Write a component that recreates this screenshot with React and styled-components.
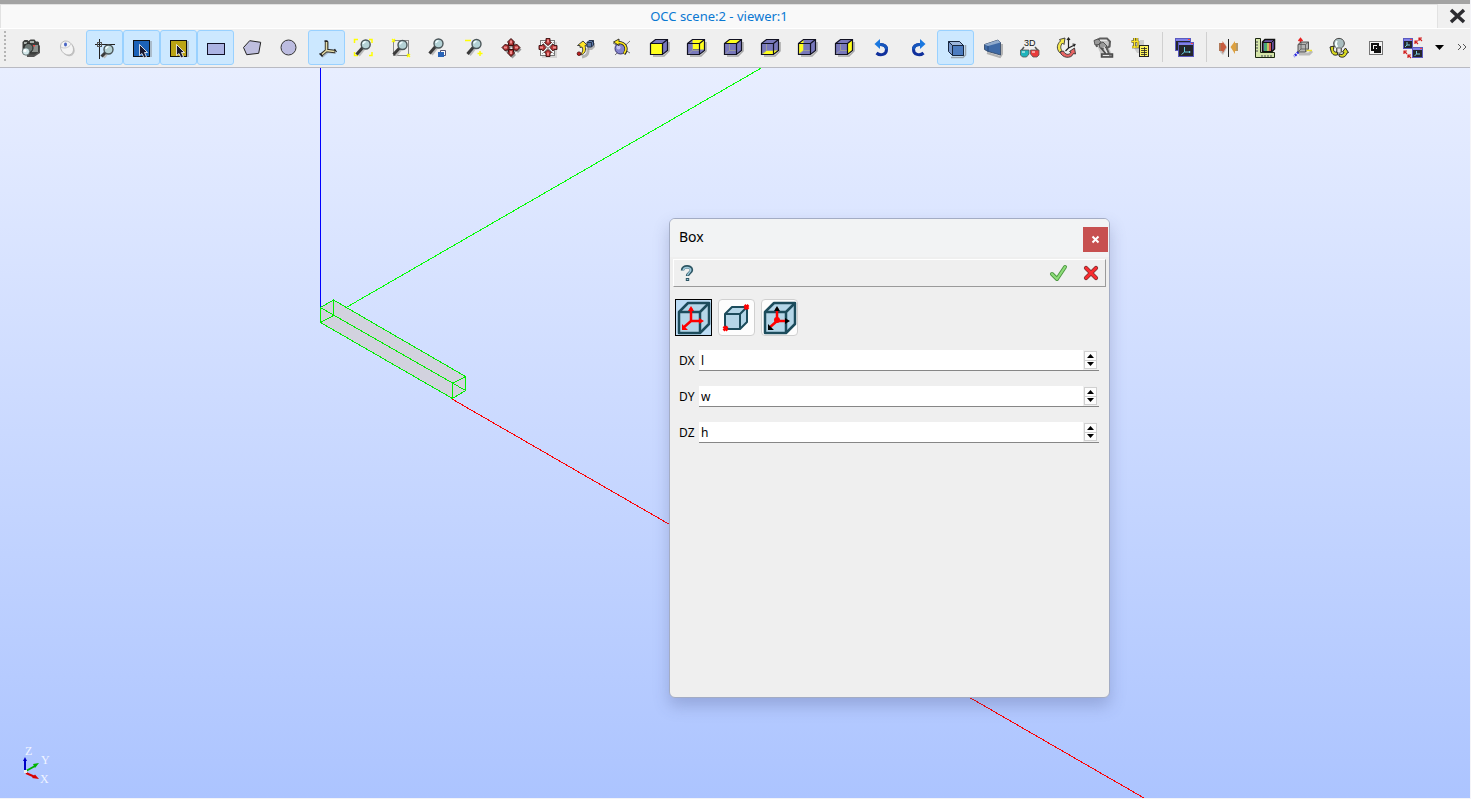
import React, { useState } from 'react';
import styled, { createGlobalStyle, css } from 'styled-components';

const GlobalStyle = createGlobalStyle`
  *, *::before, *::after { box-sizing: border-box; }
  html, body, #root { height: 100%; }
  body {
    margin: 0;
    background: #fff;
    color: #000;
    font-family: "Noto Sans", "Open Sans", sans-serif;
    font-size: 12px;
    overflow: hidden;
  }
  button, input { font: inherit; color: inherit; }
`;

/* ---------- window frame ---------- */

const Frame = styled.div`
  display: flex;
  flex-direction: column;
  height: 100vh;
  padding: 0 1px 1px 0;
  background: #f4f4f8;
`;

const TitleBar = styled.header`
  display: flex;
  flex: none;
  height: 29px;
  border-top: 4px solid #a3a3a3;
  border-bottom: 1px solid #fff;
  background: #f0f0f0;
`;

const Title = styled.h1`
  flex: 1;
  margin: 0;
  border: solid #e2e2e2;
  border-width: 1px 1px 0 1px;
  background: #f9f9f9;
  color: #0a78d2;
  font-size: 13px;
  font-weight: 400;
  line-height: 23px;
  text-align: center;
`;

const CloseView = styled.button`
  width: 32px;
  padding: 0 0 0 8px;
  border: 0;
  background: none;
  line-height: 0;
`;

/* ---------- toolbar ---------- */

const Toolbar = styled.div`
  display: flex;
  flex: none;
  align-items: center;
  height: 39px;
  padding: 0 2px 2px 4px;
  border-bottom: 1px solid #b9bac2;
  background: #efefef;
`;

const Grip = styled.span`
  width: 2px;
  height: 32px;
  margin-right: 6px;
  background: repeating-linear-gradient(#b4b4b4 0 2px, transparent 2px 4px);
`;

const ToolButton = styled.button`
  display: flex;
  flex: none;
  align-items: center;
  justify-content: center;
  width: 37px;
  height: 35px;
  padding: 0;
  border: 1px solid transparent;
  border-radius: 3px;
  background: none;
  ${(p) => p.$active && css`
    border-color: #99d1ff;
    background: #cce8ff;
  `}
`;

const Separator = styled.span`
  flex: none;
  width: 1px;
  height: 30px;
  margin: 0 3px;
  background: #d0d0d0;
`;

const MenuArrow = styled.button`
  width: 15px;
  height: 35px;
  padding: 0;
  border: 0;
  background: none;
  line-height: 0;
`;

const Overflow = styled.button`
  width: 12px;
  height: 35px;
  margin-left: auto;
  padding: 0;
  border: 0;
  background: none;
  line-height: 0;
`;

/* ---------- 3D view ---------- */

const Viewport = styled.main`
  position: relative;
  flex: 1;
  min-height: 0;
  overflow: hidden;
  background: linear-gradient(#e8eeff, #acc4ff);
`;

const SceneDrawing = styled.svg`
  position: absolute;
  inset: 0;
  width: 100%;
  height: 100%;
`;

const Trihedron = styled.svg`
  position: absolute;
  left: 18px;
  bottom: 10px;
`;

/* ---------- dialog ---------- */

const Dialog = styled.section`
  position: absolute;
  left: 669px;
  top: 150px;
  width: 441px;
  height: 480px;
  border: 1px solid #a3acc4;
  border-radius: 6px;
  background: #efefef;
  box-shadow: 0 8px 16px rgba(70, 80, 130, 0.28);
  overflow: hidden;
`;

const DialogHeader = styled.div`
  display: flex;
  align-items: flex-start;
  justify-content: space-between;
  height: 38px;
  padding: 8px 1px 0 9px;
  background: #f2f3f4;
`;

const DialogTitle = styled.h2`
  margin: 0;
  font-size: 14px;
  font-weight: 400;
  line-height: 20px;
`;

const DialogClose = styled.button`
  width: 25px;
  height: 25px;
  padding: 0;
  border: 0;
  background: #c75050;
  line-height: 0;
`;

const ActionBar = styled.div`
  display: flex;
  align-items: center;
  justify-content: space-between;
  height: 28px;
  margin: 2px 3px 0;
  padding: 0 2px;
  border: 1px solid;
  border-color: #fff #9a9a9a #9a9a9a #fff;
`;

const ActionGroup = styled.div`
  display: flex;
  gap: 8px;
`;

const ActionButton = styled.button`
  width: 24px;
  height: 24px;
  padding: 0;
  border: 0;
  background: none;
  line-height: 0;
`;

const Modes = styled.div`
  display: flex;
  gap: 6px;
  padding: 12px 5px 0;
`;

const ModeButton = styled.button`
  width: 37px;
  height: 37px;
  padding: 0;
  border: 1px solid #d0d0d0;
  border-radius: 4px;
  background: #fdfdfd;
  line-height: 0;
  ${(p) => p.$active && css`
    border-color: #000;
    border-radius: 0;
    background: #bcdcf4;
  `}
`;

const Fields = styled.form`
  display: grid;
  gap: 15px;
  padding: 14px 10px 0 9px;
`;

const Field = styled.div`
  display: flex;
  height: 21px;
`;

const FieldLabel = styled.label`
  width: 20px;
  line-height: 21px;
`;

const FieldBox = styled.div`
  display: flex;
  flex: 1;
  border-bottom: 1px solid #868686;
`;

const FieldInput = styled.input`
  flex: 1;
  min-width: 0;
  padding: 0 2px;
  border: 0;
  outline: 0;
  background: #fff;
`;

const Spin = styled.div`
  display: flex;
  flex-direction: column;
  width: 16px;
  padding: 1px 2px 1px 1px;
`;

const SpinButton = styled.button`
  display: flex;
  flex: 1;
  align-items: center;
  justify-content: center;
  min-height: 0;
  padding: 0;
  border: 1px solid #d0d0d0;
  background: #fdfdfd;
  & + & { border-top: 0; }
`;

/* ---------- icons ---------- */

const Icon = ({ children }) => (
  <svg width="25" height="25" viewBox="0 0 25 25" fill="none" aria-hidden="true">{children}</svg>
);

const Lens = ({ x = 14.5, y = 9.5, hx = 5.5, hy = 19.5 }) => (
  <g>
    <path d={`M${x - 2} ${y + 4.5}L${hx + 2} ${hy + 1}`} stroke="#bbb" strokeWidth="3" />
    <path d={`M${x - 3} ${y + 3}L${hx} ${hy}`} stroke="#3a3a3a" strokeWidth="3" />
    <circle cx={x} cy={y} r="4.5" fill="#b4d2d6" stroke="#4a5558" strokeWidth="1.4" />
    <path d={`M${x - 2.5} ${y - 0.5}a2.5 2.5 0 0 1 2.5-2.2`} stroke="#eefcff" strokeWidth="1.5" />
  </g>
);

const Camera = () => (
  <Icon>
    <path d="M8 10l11-3 3 4v7l-6 4H9z" fill="#555" />
    <path d="M4.500 7l2-2h3l1 1 2-1.500h4l1.500 2H20l1 1v9l-4 3H7l-2.500-2z" fill="#3d3f3d" />
    <path d="M6 7h3v2H6zM12 6h4v2h-4z" fill="#a9b0ac" />
    <path d="M14 10h6v7h-6z" fill="#8c918e" />
    <path d="M15 10h2v1.500h-2z" fill="#e44" />
    <circle cx="10.500" cy="13" r="4.500" fill="#6d7774" stroke="#222" />
    <circle cx="8" cy="16.500" r="3.700" fill="#d4e8ea" stroke="#4c5a5a" strokeWidth=".8" />
    <circle cx="7" cy="15.500" r="1.500" fill="#fff" />
  </Icon>
);

const Mouse = () => (
  <Icon>
    <ellipse cx="13.500" cy="14.500" rx="6" ry="7" fill="#c4c4c4" transform="rotate(-35 13.500 14.500)" />
    <ellipse cx="12" cy="13" rx="6" ry="7.500" fill="#f4f4f4" stroke="#b4b4b4" strokeWidth=".8" transform="rotate(-35 12 13)" />
    <path d="M6 12c3 2 8 1 10-3" stroke="#ccc" />
    <ellipse cx="10.500" cy="9.500" rx="1.500" ry="2" fill="#4a65c4" />
  </Icon>
);

const Preselect = () => (
  <Icon>
    <path d="M3 9.500h20M7.500 4v20" stroke="#222" strokeWidth="1" shapeRendering="crispEdges" />
    <path d="M5.500 7.500h4v4h-4z" stroke="#555" fill="none" shapeRendering="crispEdges" />
    <Lens x={16.500} y={14.500} hx={9.500} hy={21.500} />
  </Icon>
);

const PickIcon = ({ color }) => (
  <Icon>
    <path d="M7 6h16v16H7z" fill="#8a8f98" opacity=".5" />
    <path d="M4.500 5.500h16v16h-16z" fill={color} stroke="#111" shapeRendering="crispEdges" />
    <path d="M10.500 9.500v11l2.500-2 2 4.500 2.500-1-2-4.500h3z" fill="#181830" stroke="#fff" strokeWidth=".8" />
  </Icon>
);

const RectIcon = () => (
  <Icon><path d="M4.500 8.500h17v11h-17z" fill="#acb4e4" stroke="#111128" shapeRendering="crispEdges" /></Icon>
);

const Pentagon = () => (
  <Icon><path d="M3.500 12.500L9.700 5.700l11 1.600-2 11-12 1.400z" fill="#bfbfdf" stroke="#222" /></Icon>
);

const CircleIcon = () => (
  <Icon><circle cx="11.500" cy="12.500" r="7.500" fill="#bcbce0" stroke="#333" /></Icon>
);

const AxesIcon = () => (
  <Icon>
    <path d="M14 7v10l8 1M14 17l-6 5" stroke="#8c96a0" strokeWidth="2" opacity=".6" />
    <path d="M12.500 6v9.500l8.500 1M12.500 15.500L7 20" stroke="#2c2a24" strokeWidth="3.400" />
    <path d="M12.500 7v8.500l8 1M12.500 15.500L8 19.500" stroke="#e4dca8" strokeWidth="1.600" />
    <path d="M10.500 6h3M20.500 14l2 3M5.500 18.500l3 3" stroke="#222" strokeWidth="1.300" />
  </Icon>
);

const FitAll = () => (
  <Icon>
    <path d="M3.500 8V4.500H7M18 4.500h3V8M21 17v3.500h-3M7 20.500H3.500V17" stroke="#ff0" strokeWidth="1.500" />
    <Lens x={14.700} y={9.500} />
  </Icon>
);

const FitArea = () => (
  <Icon>
    <path d="M5.500 5.500h15v15h-15z" stroke="#8a8a8a" shapeRendering="crispEdges" />
    <path d="M4 4l3 3M7 4L4 7M19 19l3 3M22 19l-3 3" stroke="#ff0" strokeWidth="1.300" />
    <Lens x={14.500} y={10} />
  </Icon>
);

const FitSelection = () => (
  <Icon>
    <Lens x={13.500} y={8.500} hx={4.500} hy={18.500} />
    <path d="M15.500 15.500h5v5h-5z" fill="#fff" stroke="#557" />
    <path d="M13 17h6v5h-6z" fill="#2a64b8" />
  </Icon>
);

const ZoomIcon = () => (
  <Icon>
    <path d="M3 5.500h6M18 16v5M15.500 18.500h5" stroke="#ff0" strokeWidth="1.500" />
    <Lens x={14.500} y={9} hx={5.500} hy={19} />
  </Icon>
);

const arrowShape = 'M12 3.500l3.500 3.500-1 1v2.500h-5V8l-1-1z';
const Pan = () => (
  <Icon>
    <g transform="translate(1.500 2)" fill="#999">
      {[0, 90, 180, 270].map((a) => <path key={a} d={arrowShape} transform={`rotate(${a} 12 12.500)`} />)}
    </g>
    {[0, 90, 180, 270].map((a) => (
      <path key={a} d={arrowShape} fill="#a83030" stroke="#3a1010" strokeWidth="1" transform={`rotate(${a} 12 12.500)`} />
    ))}
    <path d="M11 5.500h2v3h-2zM5 11.500h3v2H5zM16 11.500h3v2h-3zM11 16h2v3h-2z" fill="#f08c8c" />
  </Icon>
);

const inwardShape = 'M12 10.500l3.500-3-1.500-1V3.500h-4v3l-1.500 1z';
const GlobalPan = () => (
  <Icon>
    <path d="M6 7h15v16H6z" fill="#bbb" opacity=".5" />
    <path d="M4.500 5.500h14v15h-14z" fill="#f6f6f6" stroke="#777" shapeRendering="crispEdges" />
    <path d="M6 7l12 12M18 7L6 19" stroke="#aaa" />
    {[0, 90, 180, 270].map((a) => (
      <path key={a} d={inwardShape} fill="#b83434" stroke="#3a1010" strokeWidth=".9" transform={`rotate(${a} 12 12.500)`} />
    ))}
    <path d="M11 4.500h2v3h-2zM4 11.500h3v2H4zM17 11.500h3v2h-3zM11 17.500h2v3h-2z" fill="#f08c8c" />
  </Icon>
);

const RotationPoint = () => (
  <Icon>
    <path d="M15 8h7v4l-3 3h-4z" fill="#888" opacity=".6" />
    <path d="M14 7.500l2-2h4.500V10l-2 2H14z" fill="#5b78a8" stroke="#26344e" strokeWidth="1" />
    <path d="M14 7.500h4.500V12M18.500 7.500l2-2" stroke="#26344e" />
    <path d="M9 22c6-1 7-5 5.500-9" stroke="#777" strokeWidth="3" opacity=".5" />
    <path d="M10 6l-5.500 4.500 2.500 0v2l2-.500c1.500 3 .500 5-1.500 8 4.500-1 6-4.500 4.500-9.500l2-.500z" fill="#ffe628" stroke="#333" strokeWidth=".9" />
    <circle cx="6" cy="18.700" r="1.800" fill="#c02020" stroke="#400" strokeWidth=".8" />
  </Icon>
);

const Rotate = () => (
  <Icon>
    <path d="M3 8l17 10M20 6L5 20" stroke="#666" strokeWidth=".9" />
    <circle cx="10.500" cy="13.500" r="5.500" fill="#8484cc" stroke="#38346e" />
    <circle cx="8.500" cy="12.500" r="2" fill="#c4c4f0" />
    <path d="M14 19c4-5 2-11.500-6-11.500" stroke="#222" strokeWidth="3.200" />
    <path d="M9 4v6.500L3.500 7z" fill="#ffe81c" stroke="#222" strokeWidth=".9" />
    <path d="M14 18.500c4-5 1.500-11-6-11" stroke="#ffe81c" strokeWidth="1.600" />
  </Icon>
);

const cubeFaces = {
  front: 'M3.500 8.500h12v11h-12z',
  back: 'M8.500 4.500h12v10h-12z',
  top: 'M3.500 8.500l5-4h12l-5 4z',
  bottom: 'M3.500 19.500l5-4h12l-5 4z',
  left: 'M3.500 8.500l5-4v11l-5 4z',
  right: 'M15.500 8.500l5-4v11l-5 4z',
};

const CubeIcon = ({ face }) => (
  <Icon>
    <path d="M6 21h11l5-5V7" stroke="#a8a8a8" strokeWidth="1.500" />
    <path d="M3.500 8.500l5-4h12v11l-5 4h-12z" fill="#7878bc" />
    <path d={cubeFaces[face]} fill="#ffff1e" />
    {face === 'back' && <path d="M8.500 8.500h7v6h-7z" stroke="#777" />}
    {face !== 'front' && <path d="M8.500 8.500v7h7M8.500 15.500l-5 4" stroke="#9c9c9c" />}
    <path d="M3.500 8.500l5-4h12v11l-5 4h-12zM3.500 8.500h12v11M15.500 8.500l5-4" stroke="#111122" strokeWidth="1.200" />
  </Icon>
);

const Undo = ({ flip }) => (
  <Icon>
    <g transform={flip ? 'matrix(-1 0 0 1 25 0)' : undefined}>
      <path d="M7.500 18c4 3.500 10 1.500 10-3.500 0-3-2-5-6-5" stroke="#10309c" strokeWidth="3" />
      <path d="M11 9.500c4 0 6.500 2 6.500 5" stroke="#1656bc" strokeWidth="3" />
      <path d="M11 4v10L5.500 9z" fill="#1a78e0" />
    </g>
  </Icon>
);

const Ortho = () => (
  <Icon>
    <path d="M8 22.500h12l2.500-2.500V10" stroke="#777" strokeWidth="1.500" opacity=".6" />
    <path d="M5.500 6.500h11l4 4v10h-11l-4-4z" fill="#7898cc" stroke="#17263e" />
    <path d="M5.500 6.500h11l4 4h-11z" fill="#9cb6dc" stroke="#17263e" />
    <path d="M9.500 10.500h11v10h-11z" fill="#4c7cc0" stroke="#17263e" />
  </Icon>
);

const Perspective = () => (
  <Icon>
    <path d="M7 18l13 4 2-3V9" stroke="#888" strokeWidth="2" opacity=".6" />
    <path d="M4.500 9.500L18 5l2.500 2.500V20L8 16.500l-3.500-2z" fill="#3f6aa6" stroke="#2c405e" strokeWidth=".8" />
    <path d="M4.500 9.500L18 5l2.500 2.500L8 11z" fill="#91abcc" />
    <path d="M8 11v5.500" stroke="#25487a" />
  </Icon>
);

const Stereo = () => (
  <Icon>
    <text x="7" y="11" fontFamily="Liberation Sans, sans-serif" fontSize="9" fill="#111">3D</text>
    <path d="M4 16l3-4M21.500 16L18 12" stroke="#555" strokeWidth="1.500" />
    <path d="M3.500 15h8.500v4l-2.500 3h-4l-2-2z" fill="#1fb4bc" stroke="#555" strokeWidth=".8" />
    <path d="M13.500 15H22v5l-2 2h-4l-2.500-3z" fill="#e83c3c" stroke="#555" strokeWidth=".8" />
    <path d="M5 16h3v2H5zM15 16h3v2h-3z" fill="#fff" opacity=".5" />
  </Icon>
);

const ResetIcon = () => (
  <Icon>
    <path d="M14.500 3v10l6-3M14.500 13l-3 3M13 5l1.500-2L16 5M18.500 9l2.500.500-1 2" stroke="#222" strokeWidth="1.200" />
    <path d="M11 3L5.500 4.500l1 1.500c-4 3.500-4 8-1 11.500l2.500-2c-2-2.500-1.500-5 .500-7.500L10 9.500z" fill="#f4e84c" stroke="#333" strokeWidth=".9" />
    <path d="M6 17c2 6 11 7.500 13.500 1.500l2 .500-1-6-5 3.500 1.500.500c-1.500 3.500-6 3-7.500-1z" fill="#e86464" stroke="#333" strokeWidth=".9" />
  </Icon>
);

const Grabber = () => (
  <Icon>
    <path d="M5 8l4-3 9 1 2 5-2 2 4 9H11z" fill="#c4c4c4" />
    <path d="M6 12L4.500 6 9 3.500h7l3 3-.500 5-3 1.500L18 19" stroke="#5c5c5c" strokeWidth="2" />
    <path d="M3 5.500l4-1.500 3 2.500-2 3-4 .500zM8 9l4-2 4 4-3 3-4-1z" fill="#9a9a9a" stroke="#4a4a4a" strokeWidth=".9" />
    <path d="M10 13l5 6M10.500 19h11v3h-11z" fill="#888" stroke="#4a4a4a" strokeWidth="1.500" />
    <path d="M9 5.500h6M12 20.500h6M13 12l3 6" stroke="#e4e4e4" strokeWidth="1.200" />
  </Icon>
);

const SyncIcon = () => (
  <Icon>
    <path d="M6 13h6v5H9zM12 5h4v5h-4z" fill="#aaa" opacity=".5" />
    <path d="M3.500 6.500h7M6.500 3v10M4 12h6V6M9 3v3" stroke="#333" strokeWidth="2.600" />
    <path d="M3.500 6.500h7M6.500 3v10M4 12h6V6M9 3v3" stroke="#ffe628" strokeWidth="1.500" />
    <path d="M11.500 10.500h9v11h-9z" fill="#fff45c" stroke="#222" shapeRendering="crispEdges" />
    <path d="M13 13.500h6M13 15.500h6M13 17.500h6M13 19.500h6M16.500 12v9" stroke="#222" strokeWidth=".8" />
  </Icon>
);

const MiniWindow = ({ x, y, w, h }) => (
  <g shapeRendering="crispEdges">
    <rect x={x} y={y} width={w} height={h} fill="#24262c" />
    <path d={`M${x} ${y}h${w}v3h${-w}z`} fill="#8080e8" />
    <path d={`M${x + w - 3} ${y + 1}h2v1h-2z`} fill="#f44" />
    <rect x={x + 0.5} y={y + 0.5} width={w - 1} height={h - 1} stroke="#5a5ac0" />
  </g>
);

const Windows = () => (
  <Icon>
    <MiniWindow x={3} y={3} w={16} h={13} />
    <MiniWindow x={6} y={7} w={16} h={15} />
    <path d="M12.500 12v5h6M12.500 17L9.500 19.500M17.500 16v2" stroke="#6cd" strokeWidth="1" />
  </Icon>
);

const Mirror = () => (
  <Icon>
    <path d="M4 10h4l1-2 2 5-4 7-3-3z" fill="#999" opacity=".5" />
    <path d="M3 8h3.500V6L10.500 12 6.500 18.500V16H3z" fill="#c85c40" />
    <path d="M3 8h2v8H3z" fill="#b07858" />
    <path d="M22 8h-3V6l-4.500 6 4.500 7v-3h3z" fill="#dca040" />
    <path d="M20 8h2v8h-2z" fill="#b49868" />
    <path d="M12.500 4v18" stroke="#222" shapeRendering="crispEdges" />
  </Icon>
);

const Rulers = () => (
  <Icon>
    <path d="M2.500 3.500h5v14h14v5h-19z" fill="#d4e4a8" stroke="#1c2810" />
    <path d="M3 7h2M3 10h2M3 13h2M3 16h2M9 22v-2M12 22v-2M15 22v-2M18 22v-2" stroke="#445" />
    <path d="M9.500 7l2.500-2.500h9.500v9.500L19 16.500H9.500z" fill="#6850a0" stroke="#111" strokeWidth="1.500" />
    <path d="M11 8h3v8h-3z" fill="#48a878" />
    <path d="M14 8h2v8h-2z" fill="#c8c060" />
    <path d="M16 8h2v8h-2z" fill="#d85858" />
    <path d="M9.500 7.500H18.500V16M18.500 7.500l3-3" stroke="#111" />
  </Icon>
);

const AxesBox = () => (
  <Icon>
    <path d="M9 19h10l3-3" stroke="#bbb" strokeWidth="3" />
    <path d="M10.500 11V4M8.500 6l2-2.500 2 2.500" stroke="#e82020" strokeWidth="1.500" />
    <path d="M8.500 17L4 21.500" stroke="#2424e0" strokeWidth="2.500" strokeDasharray="2 1" />
    <path d="M8 9.500L11 7h7.500v7l-3 3H8z" fill="#b4b4b4" stroke="#444" strokeWidth=".9" />
    <path d="M8 9.500h7.500V17M15.500 9.500l3-2.500M11 7v7h7.500M11 14l-3 3" stroke="#555" strokeWidth=".8" />
    <path d="M16.500 15.500H22" stroke="#ece030" strokeWidth="1.500" />
  </Icon>
);

const LightIcon = () => (
  <Icon>
    <path d="M8.500 4.500c-3 3-2 6.500 1 8.500v4h5v-4c3-2 4-5.500 1-8.500-2-1.500-5-1.500-7 0z" fill="#a8bcbe" stroke="#444" />
    <path d="M10 6c-1.500 2-1.500 4 .500 6" stroke="#f4ffff" strokeWidth="2" />
    <path d="M10 13h4v5h-4z" fill="#e4e4e4" stroke="#777" />
    <path d="M7 11l-4 1 1 4c1 4 4 5 7 3.500L10 17c-2 .500-3.500-.500-3.500-2.500zM12 21c3 2.500 7 1 8-3l1.500-.500-3-4.500-3 4 1.500.500c-.500 2-3 2.500-5 1.500z" fill="#d8d820" stroke="#222" strokeWidth="1" />
  </Icon>
);

const Overlap = () => (
  <Icon>
    <path d="M5.500 6.500h13v13h-13z" fill="#f4f4f4" stroke="#777" shapeRendering="crispEdges" />
    <path d="M8 9h6v6H8zM11 12h5v5h-5z" stroke="#111" strokeWidth="2" />
  </Icon>
);

const SyncViews = () => (
  <Icon>
    <MiniWindow x={2} y={3} w={10} h={11} />
    <MiniWindow x={11} y={12} w={11} h={11} />
    <path d="M6 7v3h3M6 10l-2 2M15.500 16v3H19M15.500 19l-2 2" stroke="#7cd" strokeWidth="1" />
    <path d="M14 9V6h3M14.200 6.200L17 9M18 6V3h3M18.200 3.200L21 6M3 19v-3h3M3.200 16.200L6 19M7 23v-3h3M7.200 20.200L10 23" stroke="#d22020" strokeWidth="1.200" />
  </Icon>
);

const mainTools = [
  ['Dump view', <Camera />],
  ['Interaction style', <Mouse />],
  ['Preselection', <Preselect />, true],
  ['Selection', <PickIcon color="#1c62b8" />, true],
  ['Multi selection', <PickIcon color="#bca414" />, true],
  ['Rectangle selection', <RectIcon />, true],
  ['Polygon selection', <Pentagon />],
  ['Circle selection', <CircleIcon />],
  ['Show trihedron', <AxesIcon />, true],
  ['Fit all', <FitAll />],
  ['Fit area', <FitArea />],
  ['Fit selection', <FitSelection />],
  ['Zoom', <ZoomIcon />],
  ['Panning', <Pan />],
  ['Global panning', <GlobalPan />],
  ['Rotation point', <RotationPoint />],
  ['Rotation', <Rotate />],
  ['Front', <CubeIcon face="front" />],
  ['Back', <CubeIcon face="back" />],
  ['Top', <CubeIcon face="top" />],
  ['Bottom', <CubeIcon face="bottom" />],
  ['Left', <CubeIcon face="left" />],
  ['Right', <CubeIcon face="right" />],
  ['Rotate counterclockwise', <Undo />],
  ['Rotate clockwise', <Undo flip />],
  ['Orthographic', <Ortho />, true],
  ['Perspective', <Perspective />],
  ['Stereo', <Stereo />],
  ['Reset', <ResetIcon />],
  ['Memorize view', <Grabber />],
  ['Restore view', <SyncIcon />],
];

const viewTools = [
  ['Clipping', <Mirror />],
  ['Scaling', <Rulers />],
  ['Graduated axes', <AxesBox />],
  ['Ambient', <LightIcon />],
  ['Maximize', <Overlap />],
  ['Synchronize views', <SyncViews />],
];

const Tools = ({ items }) => items.map(([name, icon, active]) => (
  <ToolButton key={name} type="button" aria-label={name} $active={active}>{icon}</ToolButton>
));

const BoxMode = ({ kind }) => {
  if (kind === 'points') {
    return (
      <svg width="35" height="35" viewBox="0 0 35 35" fill="none" aria-hidden="true">
        <path d="M6 14l7-7h15v15l-7 7H6z" fill="#b4d6e8" stroke="#1c4c5c" strokeWidth="2" strokeLinejoin="round" />
        <path d="M6 14h15v15M21 14l7-7" stroke="#1c4c5c" strokeWidth="2" />
        <path d="M25.500 5l4 4M29.500 5l-4 4M4.500 26.500l4 4M8.500 26.500l-4 4" stroke="#f00" strokeWidth="2.500" />
      </svg>
    );
  }
  const tip = kind === 'vectors' ? '#000' : '#f00';
  return (
    <svg width="35" height="35" viewBox="0 0 35 35" fill="none" aria-hidden="true">
      <path d="M3 12l9-9h21v21l-9 9H3z" fill="#b4d6e8" stroke="#1c4c5c" strokeWidth="2.500" strokeLinejoin="round" />
      <path d="M3 12h21v21M24 12l9-9" stroke="#1c4c5c" strokeWidth="2.500" />
      <path d="M15 8v13h9M15 21l-8 7" stroke="#f00" strokeWidth="2.500" />
      <path d="M12 11l3-5 3 5zM23 18l5 3-5 3zM6 24v6h6z" fill={tip} />
      {kind === 'vectors' && <circle cx="15" cy="20" r="3" fill="#f00" />}
    </svg>
  );
};

const modes = [
  ['Dimensions', 'dimensions'],
  ['Two points', 'points'],
  ['Vectors', 'vectors'],
];

const SizeField = ({ name, initial }) => {
  const [value, setValue] = useState(initial);
  const id = `size-${name}`;
  return (
    <Field>
      <FieldLabel htmlFor={id}>{name}</FieldLabel>
      <FieldBox>
        <FieldInput id={id} value={value} onChange={(e) => setValue(e.target.value)} />
        <Spin>
          <SpinButton type="button" aria-label={`Increase ${name}`}>
            <svg width="7" height="4"><path d="M3.500 0L7 4H0z" fill="#000" /></svg>
          </SpinButton>
          <SpinButton type="button" aria-label={`Decrease ${name}`}>
            <svg width="7" height="4"><path d="M3.500 4L7 0H0z" fill="#000" /></svg>
          </SpinButton>
        </Spin>
      </FieldBox>
    </Field>
  );
};

const BoxDialog = () => (
  <Dialog role="dialog" aria-labelledby="box-title">
    <DialogHeader>
      <DialogTitle id="box-title">Box</DialogTitle>
      <DialogClose type="button" aria-label="Close">
        <svg width="25" height="25" fill="none"><path d="M9.500 9.500l6 6M15.500 9.500l-6 6" stroke="#fff" strokeWidth="2" /></svg>
      </DialogClose>
    </DialogHeader>
    <ActionBar>
      <ActionButton type="button" aria-label="Help">
        <svg width="24" height="24" fill="none">
          <path d="M6.500 9.500C6.500 4.500 15.500 4.500 15.500 9c0 3-4 3-4 6M11.500 17v3" stroke="#2c5563" strokeWidth="3.400" />
          <path d="M7.200 9.500C7.200 5.500 14.800 5.500 14.800 9c0 2.500-3.300 3-3.300 5.500M11.500 18v1" stroke="#9cc8da" strokeWidth="1.500" />
        </svg>
      </ActionButton>
      <ActionGroup>
        <ActionButton type="button" aria-label="Apply">
          <svg width="24" height="24" fill="none">
            <path d="M5 13l5 5 8-12" stroke="#4c9640" strokeWidth="4" strokeLinecap="round" strokeLinejoin="round" />
            <path d="M5 13l5 5 8-12" stroke="#8cdc78" strokeWidth="2.200" strokeLinecap="round" strokeLinejoin="round" />
          </svg>
        </ActionButton>
        <ActionButton type="button" aria-label="Cancel">
          <svg width="24" height="24" fill="none">
            <path d="M7 7l10 10M17 7L7 17" stroke="#7c3030" strokeWidth="4.200" strokeLinecap="round" />
            <path d="M7 7l10 10M17 7L7 17" stroke="#fa2c30" strokeWidth="2.600" strokeLinecap="round" />
          </svg>
        </ActionButton>
      </ActionGroup>
    </ActionBar>
    <Modes>
      {modes.map(([name, kind], i) => (
        <ModeButton key={kind} type="button" aria-label={name} $active={i === 0}><BoxMode kind={kind} /></ModeButton>
      ))}
    </Modes>
    <Fields onSubmit={(e) => e.preventDefault()}>
      <SizeField name="DX" initial="l" />
      <SizeField name="DY" initial="w" />
      <SizeField name="DZ" initial="h" />
    </Fields>
  </Dialog>
);

const Scene = () => (
  <SceneDrawing fill="none" aria-hidden="true" shapeRendering="crispEdges">
    <path d="M320.500 0v240" stroke="#00f" />
    <path d="M347 239L763 -1" stroke="#0f0" />
    <path d="M452 331L1144 730" stroke="#f00" />
    <path d="M320.500 239.500l13-7.500 132 76.500v14l-13 8-132-76z" fill="#d2d2de" />
    <path d="M320.500 239.500l13-7.500 132 76.500v14l-13 8-132-76zM320.500 239.500l145 83M333.500 232v15.500l-13 7M452.500 330.500v-15l13-7" stroke="#0e0" />
  </SceneDrawing>
);

const Orientation = () => (
  <Trihedron width="36" height="46" fill="none" aria-hidden="true">
    <path d="M7 29V18" stroke="#0000c8" strokeWidth="2" />
    <path d="M5 19l2-4 2 4z" fill="#0000c8" />
    <path d="M8 29l9-5" stroke="#00b400" strokeWidth="2" />
    <path d="M15 22l6-1-4 5z" fill="#00b400" />
    <path d="M8 31l9 4" stroke="#d80000" strokeWidth="2" />
    <path d="M17 32.500l4 4.500-7-1z" fill="#d80000" />
    <rect x="6" y="28" width="3" height="3" fill="#eee" />
    <g fill="#f0f4ff" fontFamily="Liberation Serif, serif" fontSize="12">
      <text x="7" y="13">Z</text>
      <text x="23" y="22">Y</text>
      <text x="22" y="41">X</text>
    </g>
  </Trihedron>
);

export default function App() {
  return (
    <>
      <GlobalStyle />
      <Frame>
        <TitleBar>
          <Title>OCC scene:2 - viewer:1</Title>
          <CloseView type="button" aria-label="Close view">
            <svg width="20" height="20" fill="none"><path d="M3 4l13 12M16 4L3 16" stroke="#2c2c30" strokeWidth="3.500" /></svg>
          </CloseView>
        </TitleBar>
        <Toolbar role="toolbar" aria-label="View operations">
          <Grip />
          <Tools items={mainTools} />
          <Separator />
          <ToolButton type="button" aria-label="Clone view"><Windows /></ToolButton>
          <Separator />
          <Tools items={viewTools} />
          <MenuArrow type="button" aria-label="Synchronization options">
            <svg width="9" height="5"><path d="M0 0h9L4.500 5z" fill="#000" /></svg>
          </MenuArrow>
          <Overflow type="button" aria-label="More tools">
            <svg width="10" height="8" fill="none"><path d="M1 1l3 3-3 3M6 1l3 3-3 3" stroke="#555" /></svg>
          </Overflow>
        </Toolbar>
        <Viewport>
          <Scene />
          <Orientation />
          <BoxDialog />
        </Viewport>
      </Frame>
    </>
  );
}
